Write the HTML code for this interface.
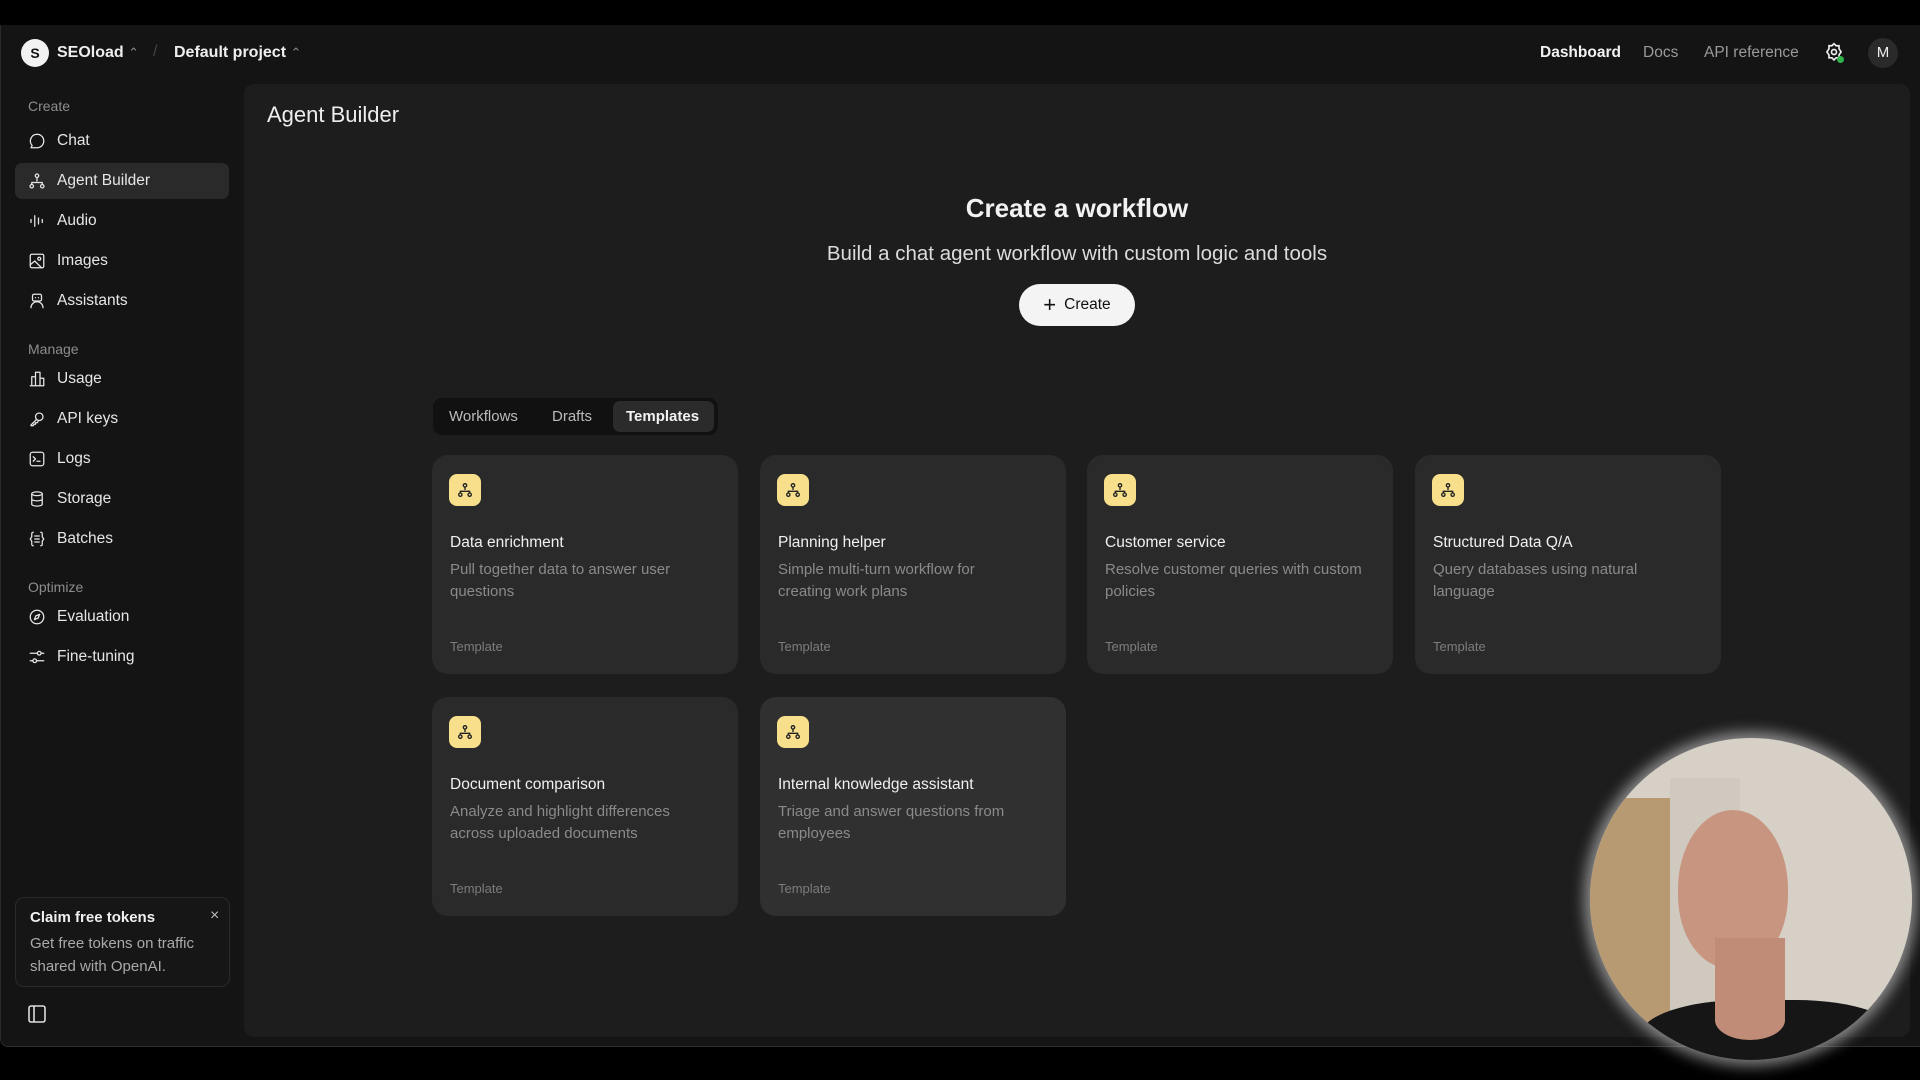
<!DOCTYPE html>
<html><head><meta charset="utf-8"><style>
*{box-sizing:border-box;margin:0;padding:0}
body{width:1920px;height:1080px;background:#000;font-family:"Liberation Sans",sans-serif;color:#ececec;position:relative;overflow:hidden}
.app{position:absolute;left:0;top:25px;width:1920px;height:1022px;background:#141414;border-left:1px solid #2a2a2a;border-bottom:1px solid #2e2e2e;border-radius:0 0 0 8px}
.abs{position:absolute;white-space:nowrap}
.main{position:absolute;left:243px;top:59px;width:1666px;height:953px;background:#1d1d1d;border-radius:10px}
.lbl{position:absolute;left:27px;font-size:14px;color:#8d8d8d}
.item{position:absolute;left:14px;width:214px;height:36px;font-size:15.5px;color:#e6e6e6;display:flex;align-items:center;padding-left:13px;border-radius:7px}
.item svg{width:18px;height:18px;margin-right:11px;fill:none;stroke:#e6e6e6;stroke-width:1.7;stroke-linecap:round;stroke-linejoin:round}
.card{position:absolute;width:306px;height:219px;background:#2a2a2a;border-radius:16px}
.card .ic{position:absolute;left:17px;top:19px;width:32px;height:32px;background:#f7df8c;border-radius:8px;display:flex;align-items:center;justify-content:center}
.card .t{position:absolute;left:18px;top:79px;font-size:15.5px;color:#f0f0f0}
.card .d{position:absolute;left:18px;top:104px;white-space:nowrap;font-size:15px;line-height:22px;color:#8a8a8a}
.card .g{position:absolute;left:18px;top:184px;font-size:13px;color:#7c7c7c}
</style></head><body>
<div class="app">
 <div class="abs" style="left:20px;top:14px;width:28px;height:28px;border-radius:50%;background:#f2f2f2;color:#111;font-size:14px;font-weight:bold;text-align:center;line-height:28px">S</div>
 <div class="abs" style="left:56px;top:19px;font-size:16px;font-weight:bold;color:#eee">SEOload <span style="color:#888;font-weight:normal;font-size:13px">⌃</span></div>
 <div class="abs" style="left:152px;top:18px;font-size:16px;color:#444">/</div>
 <div class="abs" style="left:173px;top:19px;font-size:16px;font-weight:bold;color:#eee">Default project <span style="color:#888;font-weight:normal;font-size:13px">⌃</span></div>
 <div class="abs" style="left:1539px;top:19px;font-size:15.5px;font-weight:bold;color:#f2f2f2">Dashboard</div>
 <div class="abs" style="left:1642px;top:19px;font-size:15.5px;color:#9a9a9a">Docs</div>
 <div class="abs" style="left:1703px;top:19px;font-size:15.5px;color:#9a9a9a">API reference</div>
 <svg class="abs" style="left:1823px;top:17px" width="20" height="20" viewBox="0 0 24 24" fill="none" stroke="#eee" stroke-width="2"><path d="M12 2l2.5 2.5H18v3.5L20.5 12 18 15.5V19h-3.5L12 21.5 9.5 19H6v-3.5L3.5 12 6 8V4.5h3.5z"/><circle cx="12" cy="12" r="3"/></svg>
 <div class="abs" style="left:1836px;top:31px;width:7px;height:7px;border-radius:50%;background:#2fb34a"></div>
 <div class="abs" style="left:1867px;top:13px;width:30px;height:30px;border-radius:50%;background:#2a2a2a;color:#eee;font-size:15px;text-align:center;line-height:30px">M</div>

 <div class="lbl" style="top:73px">Create</div>
 <div class="item" style="top:98px"><svg viewBox="0 0 24 24"><path d="M12 3a9 9 0 0 1 0 18H4l1.5-3A9 9 0 0 1 12 3z"/></svg>Chat</div>
 <div class="item" style="top:138px;background:#2a2a2a"><svg viewBox="0 0 24 24"><circle cx="12" cy="5" r="2.3"/><circle cx="5" cy="19" r="2.3"/><circle cx="19" cy="19" r="2.3"/><path d="M12 7.3v4.7M5 16.7V14h14v2.7"/></svg>Agent Builder</div>
 <div class="item" style="top:178px"><svg viewBox="0 0 24 24"><path d="M4 10v4M9 5v14M14 8v8M19 10v4"/></svg>Audio</div>
 <div class="item" style="top:218px"><svg viewBox="0 0 24 24"><rect x="3" y="3" width="18" height="18" rx="2"/><circle cx="15" cy="9" r="2"/><path d="M3 17l6-5 9 9"/></svg>Images</div>
 <div class="item" style="top:258px"><svg viewBox="0 0 24 24"><rect x="6" y="3" width="12" height="9" rx="2"/><path d="M10 7.5v.1M14 7.5v.1M4 21a8 8 0 0 1 16 0"/></svg>Assistants</div>
 <div class="lbl" style="top:316px">Manage</div>
 <div class="item" style="top:336px"><svg viewBox="0 0 24 24"><path d="M3 21h18V11h-5V3H10v6H5v12M10 9v12M16 11v10"/></svg>Usage</div>
 <div class="item" style="top:376px"><svg viewBox="0 0 24 24"><circle cx="15" cy="9" r="5"/><path d="M11.5 12.5L4 20v1h3l1-2h2v-2h2l1.5-1.5"/></svg>API keys</div>
 <div class="item" style="top:416px"><svg viewBox="0 0 24 24"><rect x="3" y="3" width="18" height="18" rx="3"/><path d="M7 9l3 3-3 3M12 15h4"/></svg>Logs</div>
 <div class="item" style="top:456px"><svg viewBox="0 0 24 24"><ellipse cx="12" cy="5" rx="7" ry="2.5"/><path d="M5 5v14c0 1.4 3 2.5 7 2.5s7-1.1 7-2.5V5M5 12c0 1.4 3 2.5 7 2.5s7-1.1 7-2.5"/></svg>Storage</div>
 <div class="item" style="top:496px"><svg viewBox="0 0 24 24"><path d="M7 3c-2 0-2 1-2 3v3l-2 3 2 3v3c0 2 0 3 2 3M17 3c2 0 2 1 2 3v3l2 3-2 3v3c0 2 0 3-2 3M9 8h6M9 12h6M9 16h6"/></svg>Batches</div>
 <div class="lbl" style="top:554px">Optimize</div>
 <div class="item" style="top:574px"><svg viewBox="0 0 24 24"><circle cx="12" cy="12" r="9"/><path d="M15.5 8.5l-2 5-5 2 2-5z"/></svg>Evaluation</div>
 <div class="item" style="top:614px"><svg viewBox="0 0 24 24"><path d="M3 7h18M3 17h18"/><circle cx="15" cy="7" r="2.5" fill="#141414"/><circle cx="9" cy="17" r="2.5" fill="#141414"/></svg>Fine-tuning</div>

 <div class="abs" style="left:14px;top:872px;width:215px;height:90px;border:1px solid #2a2a2a;border-radius:9px;background:#161616">
  <div class="abs" style="left:14px;top:11px;font-size:15px;font-weight:bold;color:#f0f0f0">Claim free tokens</div>
  <div class="abs" style="left:194px;top:9px;font-size:16px;color:#bbb">×</div>
  <div class="abs" style="left:14px;top:34px;font-size:15px;line-height:23px;color:#aaa;white-space:normal;width:190px">Get free tokens on traffic shared with OpenAI.</div>
 </div>
 <svg class="abs" style="left:27px;top:980px" width="18" height="18" viewBox="0 0 18 18" fill="none" stroke="#ddd" stroke-width="1.6"><rect x="1" y="1" width="16" height="16" rx="2"/><path d="M6 1v16"/></svg>

 <div class="main">
  <div class="abs" style="left:23px;top:18px;font-size:22px;color:#eee">Agent Builder</div>
  <div class="abs" style="left:0;width:1666px;text-align:center;top:109px;font-size:26px;font-weight:bold;color:#f2f2f2">Create a workflow</div>
  <div class="abs" style="left:0;width:1666px;text-align:center;top:158px;font-size:20.5px;color:#dcdcdc">Build a chat agent workflow with custom logic and tools</div>
  <div class="abs" style="left:775px;top:200px;width:116px;height:42px;border-radius:21px;background:#f4f4f4;color:#111;font-size:15.5px;display:flex;align-items:center;justify-content:center;gap:8px"><span style="font-size:22px;line-height:20px;font-weight:300">+</span>Create</div>
  <div class="abs" style="left:189px;top:314px;width:285px;height:37px;border-radius:9px;background:#111">
   <div class="abs" style="left:16px;top:10px;font-size:15px;color:#bbb">Workflows</div>
   <div class="abs" style="left:119px;top:10px;font-size:15px;color:#bbb">Drafts</div>
   <div class="abs" style="left:180px;top:3px;width:101px;height:31px;border-radius:7px;background:#2b2b2b"></div>
   <div class="abs" style="left:193px;top:10px;font-size:15px;font-weight:bold;color:#f2f2f2">Templates</div>
  </div>
 </div>
</div>

<div class="card" style="left:432px;top:455px"><div class="ic"><svg width="16" height="16" viewBox="0 0 24 24" fill="none" stroke="#222" stroke-width="2"><circle cx="12" cy="5" r="2.5"/><circle cx="5" cy="19" r="2.5"/><circle cx="19" cy="19" r="2.5"/><path d="M12 7.5v4.5M5 16.5V14h14v2.5"/></svg></div><div class="t">Data enrichment</div><div class="d">Pull together data to answer user<br>questions</div><div class="g">Template</div></div>
<div class="card" style="left:760px;top:455px"><div class="ic"><svg width="16" height="16" viewBox="0 0 24 24" fill="none" stroke="#222" stroke-width="2"><circle cx="12" cy="5" r="2.5"/><circle cx="5" cy="19" r="2.5"/><circle cx="19" cy="19" r="2.5"/><path d="M12 7.5v4.5M5 16.5V14h14v2.5"/></svg></div><div class="t">Planning helper</div><div class="d">Simple multi-turn workflow for<br>creating work plans</div><div class="g">Template</div></div>
<div class="card" style="left:1087px;top:455px"><div class="ic"><svg width="16" height="16" viewBox="0 0 24 24" fill="none" stroke="#222" stroke-width="2"><circle cx="12" cy="5" r="2.5"/><circle cx="5" cy="19" r="2.5"/><circle cx="19" cy="19" r="2.5"/><path d="M12 7.5v4.5M5 16.5V14h14v2.5"/></svg></div><div class="t">Customer service</div><div class="d">Resolve customer queries with custom<br>policies</div><div class="g">Template</div></div>
<div class="card" style="left:1415px;top:455px"><div class="ic"><svg width="16" height="16" viewBox="0 0 24 24" fill="none" stroke="#222" stroke-width="2"><circle cx="12" cy="5" r="2.5"/><circle cx="5" cy="19" r="2.5"/><circle cx="19" cy="19" r="2.5"/><path d="M12 7.5v4.5M5 16.5V14h14v2.5"/></svg></div><div class="t">Structured Data Q/A</div><div class="d">Query databases using natural<br>language</div><div class="g">Template</div></div>
<div class="card" style="left:432px;top:697px"><div class="ic"><svg width="16" height="16" viewBox="0 0 24 24" fill="none" stroke="#222" stroke-width="2"><circle cx="12" cy="5" r="2.5"/><circle cx="5" cy="19" r="2.5"/><circle cx="19" cy="19" r="2.5"/><path d="M12 7.5v4.5M5 16.5V14h14v2.5"/></svg></div><div class="t">Document comparison</div><div class="d">Analyze and highlight differences<br>across uploaded documents</div><div class="g">Template</div></div>
<div class="card" style="left:760px;top:697px;background:#303030"><div class="ic"><svg width="16" height="16" viewBox="0 0 24 24" fill="none" stroke="#222" stroke-width="2"><circle cx="12" cy="5" r="2.5"/><circle cx="5" cy="19" r="2.5"/><circle cx="19" cy="19" r="2.5"/><path d="M12 7.5v4.5M5 16.5V14h14v2.5"/></svg></div><div class="t">Internal knowledge assistant</div><div class="d">Triage and answer questions from<br>employees</div><div class="g">Template</div></div>

<div class="abs" style="left:1590px;top:738px;width:322px;height:322px;border-radius:50%;overflow:hidden;background:#d6d0c6;box-shadow:0 0 14px 6px rgba(230,230,230,.55)">
 <div class="abs" style="left:0;top:60px;width:80px;height:230px;background:#b89a72"></div>
 <div class="abs" style="left:80px;top:40px;width:70px;height:260px;background:#cfc9bf"></div>
 <div class="abs" style="left:88px;top:72px;width:110px;height:158px;border-radius:50% 50% 46% 46%;background:#c89680"></div>
 <div class="abs" style="left:125px;top:200px;width:70px;height:80px;background:#c08c78"></div>
 <div class="abs" style="left:50px;top:262px;width:260px;height:90px;border-radius:40% 40% 0 0;background:#161616"></div>
 <div class="abs" style="left:125px;top:262px;width:70px;height:40px;border-radius:0 0 50% 50%;background:#c08c78"></div>
</div>
</body></html>
